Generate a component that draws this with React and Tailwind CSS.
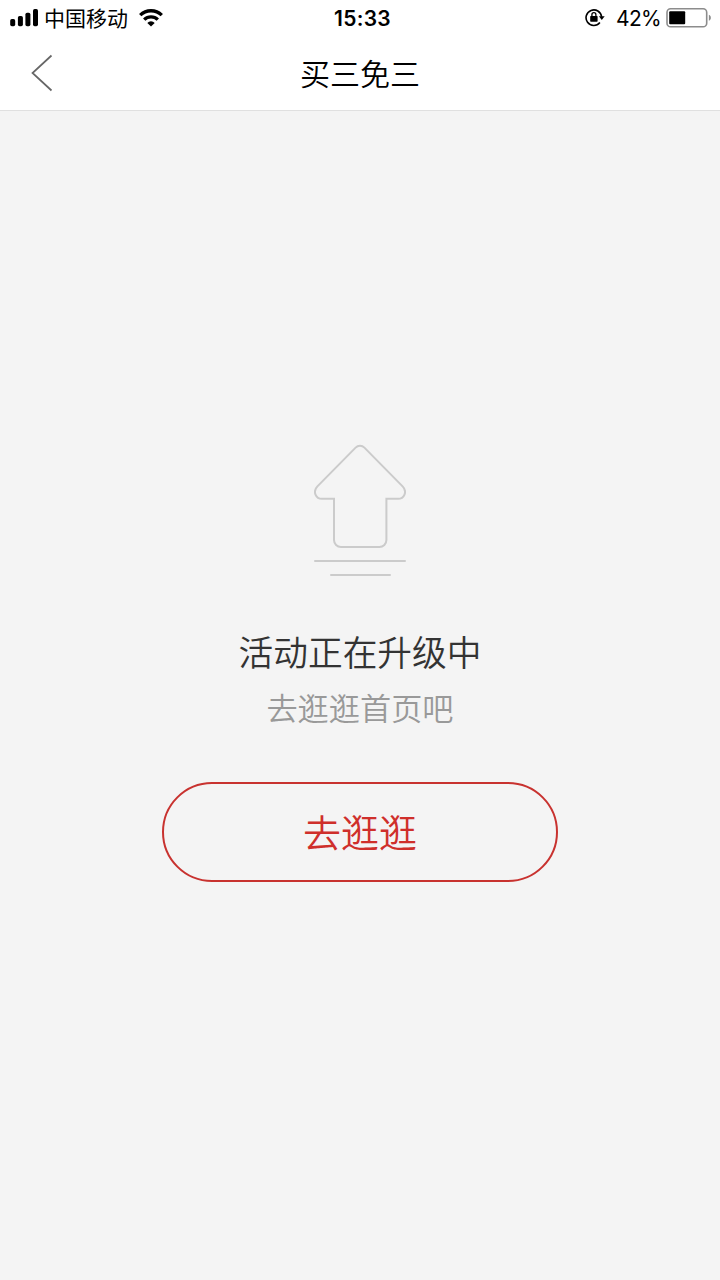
import React from 'react';

const SANS = "font-['Inter','Noto_Sans_CJK_SC',sans-serif]";

function SignalIcon() {
  return (
    <svg width="28" height="18" viewBox="0 0 28 18" fill="#000">
      <rect x="0.2" y="10" width="5" height="7.2" rx="1.7" />
      <rect x="7.9" y="7" width="5" height="10.2" rx="1.7" />
      <rect x="15.4" y="3.8" width="5" height="13.4" rx="1.7" />
      <rect x="23" y="0" width="5" height="17.2" rx="1.7" />
    </svg>
  );
}

function WifiIcon() {
  return (
    <svg width="24" height="18" viewBox="0 0 24 18" fill="none" stroke="#000" strokeWidth="3.3">
      <path d="M1.2 6.2a15.3 15.3 0 0 1 21.6 0" />
      <path d="M5.2 10.6a9.6 9.6 0 0 1 13.6 0" />
      <path d="M12 17.6l-3.7-3.7a5.2 5.2 0 0 1 7.4 0z" fill="#000" stroke="none" />
    </svg>
  );
}

function RotationLockIcon() {
  return (
    <svg width="20" height="18" viewBox="0 0 20 18" fill="none" stroke="#000">
      <path d="M14.9 13.6A7.8 7.8 0 1 1 16.6 7.8" strokeWidth="1.6" />
      <path d="M13.9 7.2h5.8l-2.9 3.7z" fill="#000" stroke="none" />
      <rect x="5.2" y="7" width="7.4" height="5.8" rx="0.7" fill="#000" stroke="none" />
      <path d="M6.9 7.4V5.7a2 2 0 0 1 4 0v1.7" strokeWidth="1.3" />
    </svg>
  );
}

function BatteryIcon() {
  return (
    <svg width="46" height="20" viewBox="0 0 46 20" fill="none">
      <rect x="1" y="0.8" width="39.7" height="18" rx="3.6" stroke="#8c8c8c" strokeWidth="1.6" />
      <rect x="3.2" y="3.2" width="16" height="13" rx="1" fill="#000" />
      <path d="M42.9 6.8c2.6 1 2.6 5 0 6z" fill="#8c8c8c" />
    </svg>
  );
}

function StatusBar() {
  return (
    <div className="grid h-9 grid-cols-[1fr_auto_1fr] items-center text-black">
      <div className="flex items-center pl-[10px]">
        <SignalIcon />
        <span className="ml-[6px] pt-px text-[21px] leading-[35px]">中国移动</span>
        <span className="ml-[11px]">
          <WifiIcon />
        </span>
      </div>
      <span className="ml-[5px] pt-0.5 text-[21px] font-semibold leading-[34px] tracking-[0.3px]">15:33</span>
      <div className="flex items-center justify-end pr-2">
        <RotationLockIcon />
        <span className="ml-[11px] mr-[5px] pt-0.5 text-[21px] leading-[34px] tracking-[-0.7px]">42%</span>
        <BatteryIcon />
      </div>
    </div>
  );
}

function NavBar() {
  return (
    <div className="grid h-[74px] grid-cols-[1fr_auto_1fr] items-center">
      <button type="button" aria-label="返回" className="pl-[31px]">
        <svg width="22" height="38" viewBox="0 0 22 38" fill="none" stroke="#666" strokeWidth="1.7">
          <path d="M20.5 1.5L1.5 19l19 17.5" />
        </svg>
      </button>
      <h1 className="pt-0.5 text-[30px] font-[350] leading-[72px] text-black">买三免三</h1>
    </div>
  );
}

function UpgradeIcon() {
  return (
    <svg width="92" height="134" viewBox="0 0 92 134" fill="none" stroke="#cbcbcb" strokeWidth="2" strokeLinecap="round">
      <path d="M41.6 3.6a6.2 6.2 0 0 1 8.8 0L88.6 42.4c5 5.2 1.6 12.4-4.6 12.4H72.4V96a7 7 0 0 1-7 7H27a7 7 0 0 1-7-7V54.8H8c-6.2 0-9.6-7.2-4.6-12.4z" />
      <path d="M1 117h90M17 131h59" />
    </svg>
  );
}

export default function App() {
  return (
    <div className={`flex h-[1280px] w-[720px] flex-col bg-[#f4f4f4] ${SANS}`}>
      <header className="h-[111px] border-b border-[#e0e0e0] bg-white">
        <StatusBar />
        <NavBar />
      </header>

      <main className="flex flex-1 flex-col items-center pt-[333px]">
        <UpgradeIcon />
        <p className="mt-[50px] text-[34.7px] font-[350] leading-[50px] text-[#333]">活动正在升级中</p>
        <p className="mt-[9px] text-[31.2px] font-[350] leading-[44px] text-[#999]">去逛逛首页吧</p>
        <button
          type="button"
          className="mt-[51px] h-[100px] w-[396px] rounded-full border-2 border-[#c8322f] pt-0.5 text-[38px] font-[350] text-[#cf2f2b]"
        >
          去逛逛
        </button>
      </main>
    </div>
  );
}
